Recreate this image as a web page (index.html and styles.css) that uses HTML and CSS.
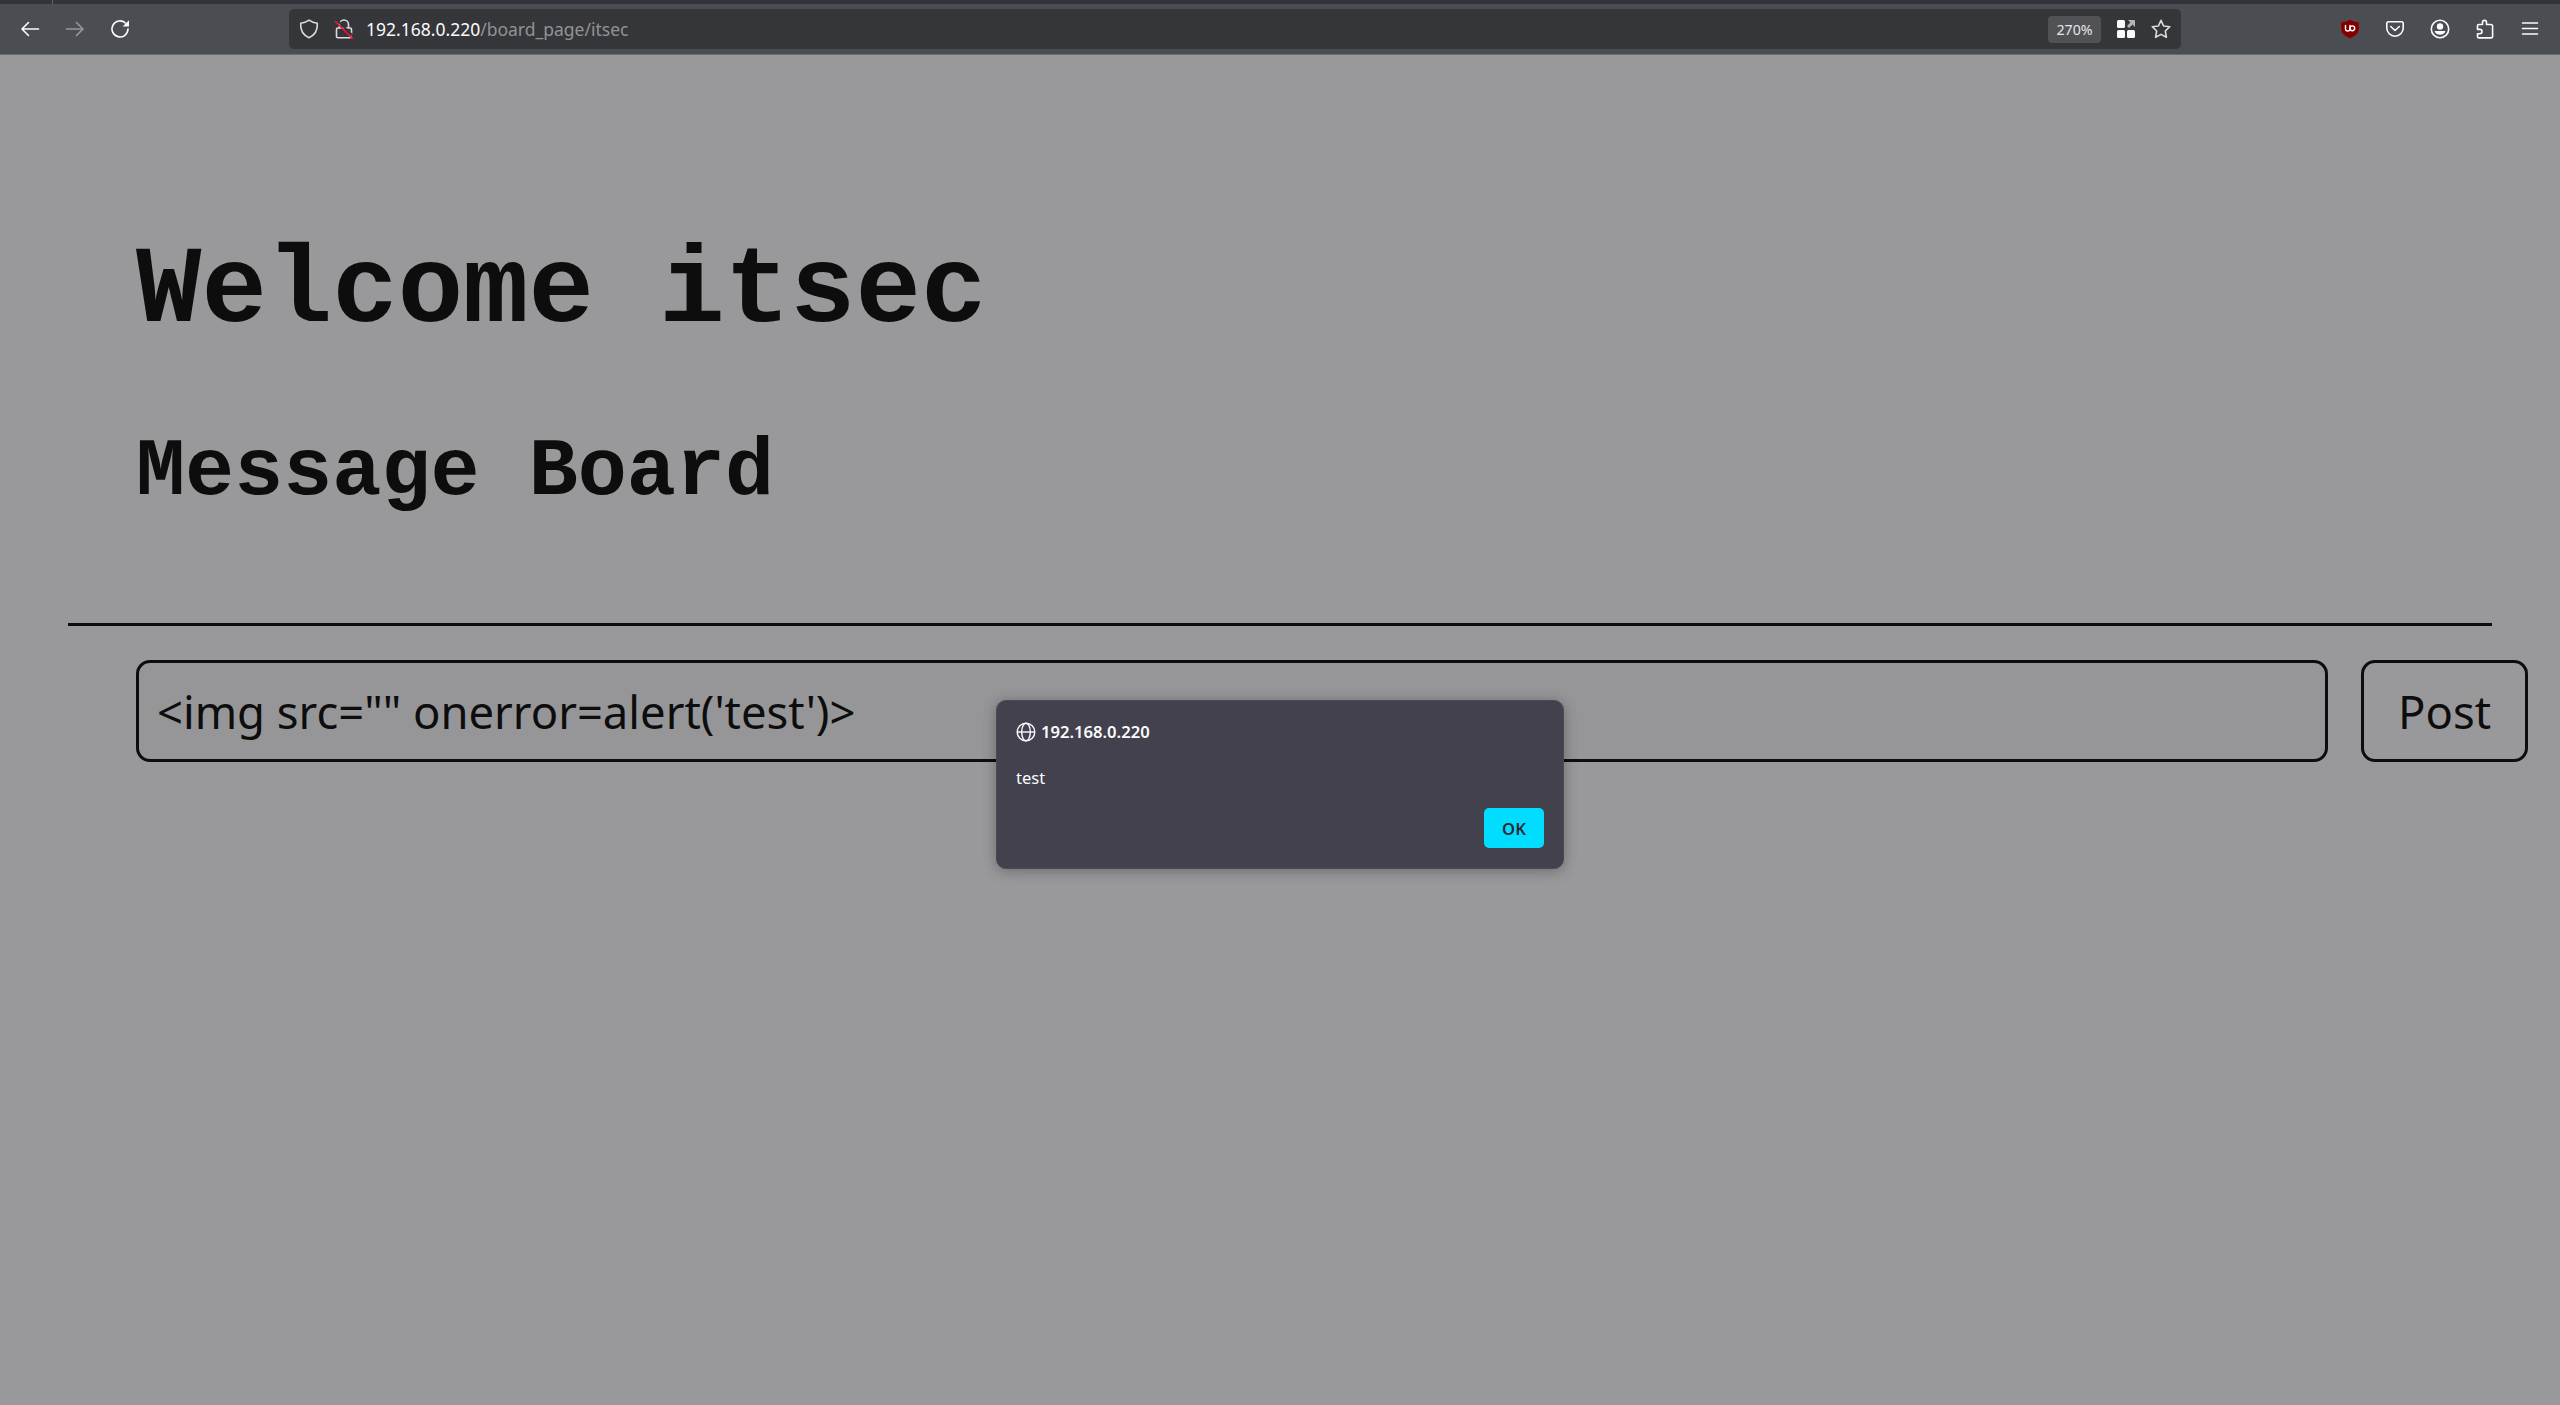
FILE: index.html
```html
<!DOCTYPE html>
<html lang="en">
<head>
<meta charset="utf-8">
<title>Message Board</title>
<link rel="stylesheet" href="styles.css">
</head>
<body>
<div class="tabstrip"><span class="tab-sep"></span></div>
<header class="toolbar">
  <nav class="nav">
    <svg class="icon" viewBox="0 0 20 20"><path d="M18.500 10H2M8.500 3.500 2 10l6.500 6.500"/></svg>
    <svg class="icon dim" viewBox="0 0 20 20"><path d="M1.500 10H18M11.500 3.500 18 10l-6.500 6.500"/></svg>
    <svg class="icon" viewBox="0 0 20 20"><path d="M18 10a8 8 0 1 1-2.600-6"/><path class="solid" d="M19 1.200v6.300h-6.300z"/></svg>
  </nav>
  <div class="urlbar">
    <svg class="icon shield" viewBox="0 0 20 20"><path d="M10 1.200c2.500 1.800 5 2.700 8.300 3.100.4 5.700-1.700 11.500-8.300 14.400C3.400 15.800 1.300 10 1.700 4.300c3.300-.4 5.800-1.300 8.300-3.100z"/></svg>
    <svg class="icon lock" viewBox="0 0 20 20"><path d="M5.500 9V5.500a4.500 4.500 0 0 1 9 0V9M4 9h12q1.500 0 1.500 1.500v7q0 1.300-1.500 1.300H4q-1.500 0-1.500-1.300v-7Q2.500 9 4 9z"/><path class="gap" d="M3.500 1.500 20 18"/><path class="slash" d="M1.500 2.500 18.500 19.500"/></svg>
    <span class="url"><b>192.168.0.220</b>/board_page/itsec</span>
    <span class="zoom">270%</span>
    <svg class="icon grid" viewBox="0 0 20 20"><rect class="solid" x="1" y="1" width="8" height="8" rx="1.500"/><rect class="solid" x="1" y="11" width="8" height="8" rx="1.500"/><rect class="solid" x="11" y="11" width="8" height="8" rx="1.500"/><path class="grey" d="M12 1h6q1 0 1 1v6l-2.500-2.400-3.500 3.400-2-2 3.400-3.500z"/></svg>
    <svg class="icon star" viewBox="0 0 20 20"><path d="m10 1.300 2.600 5.700 6.200.7-4.500 4.300 1.100 6.300-5.400-2.900-5.400 2.900L5.700 12 1.200 7.700l6.200-.7z"/></svg>
  </div>
  <nav class="tools">
    <svg class="icon" viewBox="0 0 20 20"><path class="ublock" d="M10 .5c2.600 1.700 5.400 2.400 9 2.500v7c0 4.500-4 7.200-9 9.500-5-2.300-9-5-9-9.500V3C4.600 2.900 7.400 2.200 10 .5z"/><path class="mark" d="M5.500 6.500v3.300a2 2 0 0 0 4.500 0V6.500"/><circle class="mark" cx="12.300" cy="9.300" r="2.400"/></svg>
    <svg class="icon" viewBox="0 0 20 20"><path d="M3.500 2.800h13q1.700 0 1.700 1.700V9a8.200 8.200 0 0 1-16.400 0V4.500q0-1.700 1.700-1.700z"/><path d="m5.700 7.500 4.300 4 4.300-4"/></svg>
    <svg class="icon" viewBox="0 0 20 20"><circle cx="10" cy="10" r="8.700"/><circle class="solid" cx="10" cy="7.500" r="3.200"/><path class="solid" d="M4.700 12h10.600c0 2-2.300 3.700-5.300 3.700S4.700 14 4.700 12z"/></svg>
    <svg class="icon" viewBox="0 0 20 20"><path d="M2.500 8.500V6.700q0-1.200 1.200-1.200h3.800V3.400a2 2 0 0 1 4 0v2.100h4.300q1.800 0 1.800 1.700v10q0 1.700-1.800 1.700H4.200q-1.700 0-1.700-1.700v-2.400h2.300a2.200 2.200 0 0 0 0-4.400H2.500z"/></svg>
    <svg class="icon" viewBox="0 0 20 20"><path d="M2.500 4h15M2.500 9.500h15M2.500 15h15"/></svg>
  </nav>
</header>
<main class="page">
  <h1>Welcome itsec</h1>
  <h2>Message Board</h2>
  <hr>
  <form class="post-form">
    <div class="field">&lt;img src="" onerror=alert('test')&gt;</div>
    <button class="post" type="button">Post</button>
  </form>
</main>
<section class="dialog" role="alertdialog">
  <div class="origin">
    <svg class="globe" viewBox="0 0 20 20"><circle cx="10" cy="10" r="8.800"/><ellipse cx="10" cy="10" rx="4.300" ry="8.800"/><path d="M1.200 10h17.600"/></svg>
    <span>192.168.0.220</span>
  </div>
  <p>test</p>
  <button class="ok" type="button">OK</button>
</section>
</body>
</html>
```
FILE: styles.css
```css
* { box-sizing: border-box; }
body {
  margin: 0;
  height: 1405px;
  overflow: hidden;
  background: #99999b;
  font-family: "Noto Sans", sans-serif;
  color: #0d0d0e;
}
.tabstrip { height: 4px; background: #31343a; padding-left: 52px; display: flex; }
.tab-sep { width: 1px; background: #62656a; }
.toolbar {
  height: 51px;
  padding: 5px 0 5px 20px;
  background: #4a4d51;
  border-bottom: 1px solid #6c6d70;
  display: flex;
  align-items: flex-start;
}
.icon { width: 20px; height: 20px; flex: none; fill: none; stroke: #fbfbfe; stroke-width: 1.6; stroke-linecap: round; stroke-linejoin: round; }
.dim { stroke: #96979a; }
.solid { fill: #fbfbfe; stroke: none; }
.grey { fill: #b5b5b8; stroke: none; }
.gap { stroke: #35363a; stroke-width: 2; }
.slash { stroke: #f5103f; }
.ublock { fill: #800000; stroke: #8c3034; stroke-width: .6; }
.mark { stroke-width: 1.4; }
.nav { display: flex; flex: none; gap: 25px; width: 269px; height: 40px; align-items: center; }
.urlbar {
  flex: none;
  width: 1892px;
  height: 40px;
  border-radius: 5px;
  background: #35363a;
  display: flex;
  align-items: center;
  padding: 0 10px 0 10px;
}
.lock { margin-left: 15px; }
.url { margin-left: 12px; flex: 1; font-size: 17.5px; line-height: 41px; color: #929295; }
.url b { font-weight: 400; color: #fbfbfe; }
.zoom { width: 53px; height: 27px; border-radius: 4px; background: #515256; color: #e5e5e8; font-size: 14.2px; line-height: 27px; text-align: center; }
.grid { margin-left: 15px; }
.star { margin-left: 15px; }
.shield, .lock, .star { stroke: #dcdcdf; }
.tools { margin-left: 159px; height: 40px; display: flex; flex: none; align-items: center; gap: 25px; }
.page { padding: 176px 32px 0 68px; }
h1, h2 { margin: 0 0 0 68px; font-family: "Liberation Mono", monospace; font-weight: 700; }
h1 { font-size: 109px; line-height: 122px; }
h2 { margin-top: 74px; font-size: 81.8px; line-height: 92px; }
hr { width: 2424px; height: 3px; margin: 104px 0 0; border: 0; background: #0d0d0e; }
.post-form { display: flex; gap: 33px; margin: 34px 0 0 68px; }
.field, .post { height: 102px; border: 3px solid #0d0d0e; border-radius: 14px; font: 45.4px/97px "Noto Sans", sans-serif; color: #0d0d0e; }
.field { width: 2192px; padding-left: 18px; background: #969698; white-space: pre; }
.post { width: 167px; padding: 0; background: none; }
.dialog {
  position: absolute;
  left: 996px;
  top: 700px;
  width: 568px;
  height: 169px;
  padding: 20px 20px 20px 19px;
  border: 1px solid #4b4a56;
  border-radius: 10px;
  background: #42414d;
  box-shadow: 0 2px 14px rgba(0, 0, 0, .3);
  color: #fbfbfe;
  font-size: 16.6px;
  display: flex;
  flex-direction: column;
}
.origin { display: flex; align-items: center; gap: 5px; height: 21px; font-weight: 600; }
.globe { width: 20px; height: 20px; fill: none; stroke: #fbfbfe; stroke-width: 1.4; }
.dialog p { margin: 24px 0 0; line-height: 24px; }
.ok { align-self: flex-end; width: 60px; height: 41px; margin: 18px -1px 0 0; padding: 0; border: 0; border-radius: 5px; background: #00ddff; color: #2b2a33; font: 600 16.6px "Noto Sans", sans-serif; }
```
